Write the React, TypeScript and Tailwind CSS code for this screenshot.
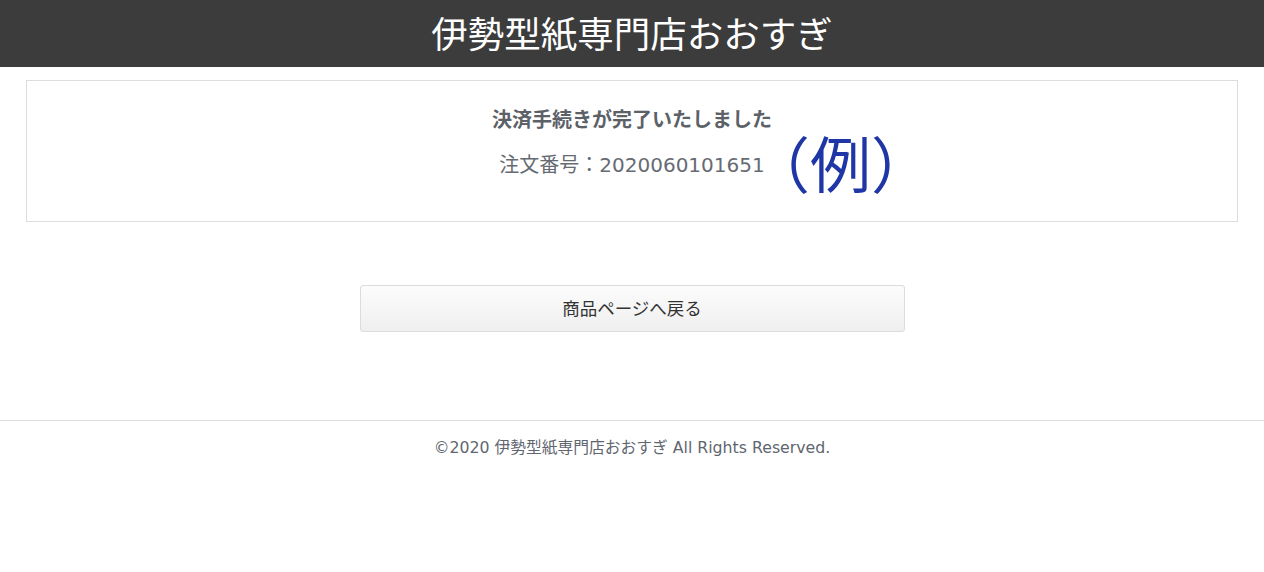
import React from "react";

export default function App() {
  const font = { fontFamily: '"DejaVu Sans", "Noto Sans CJK JP", sans-serif' };
  const cjk = { fontFamily: '"Noto Sans CJK JP", sans-serif' };
  return (
    <div className="w-full min-h-[572px] bg-white" style={font}>
      <header className="h-[67px] bg-[#3c3c3c] flex items-center justify-center">
        <h1 className="text-white text-[36.5px] leading-none font-normal" style={cjk}>伊勢型紙専門店おおすぎ</h1>
      </header>
      <div className="px-[26px] pt-[13px]">
        <div className="relative border border-[#dddddd] h-[142px] flex flex-col items-center pt-[24px]">
          <p className="text-[20px] font-bold text-[#5c6168] leading-[28px]" style={cjk}>決済手続きが完了いたしました</p>
          <p className="text-[20px] text-[#666b73] leading-[28px] mt-[18px]">注文番号：2020060101651</p>
          <span className="absolute left-[722px] top-[50px] text-[61px] leading-none text-[#1f36a6]" style={cjk}>（例）</span>
        </div>
      </div>
      <div className="flex justify-center mt-[63px]">
        <button className="w-[545px] h-[47px] border border-[#dcdcdc] rounded-[3px] bg-gradient-to-b from-[#fcfcfc] to-[#efefef] text-[17.5px] text-[#333]" style={cjk}>
          商品ページへ戻る
        </button>
      </div>
      <footer className="mt-[88px] border-t border-[#dddddd] pt-[15px] text-center text-[15.75px] text-[#5f6670]">
        ©2020 伊勢型紙専門店おおすぎ All Rights Reserved.
      </footer>
    </div>
  );
}
